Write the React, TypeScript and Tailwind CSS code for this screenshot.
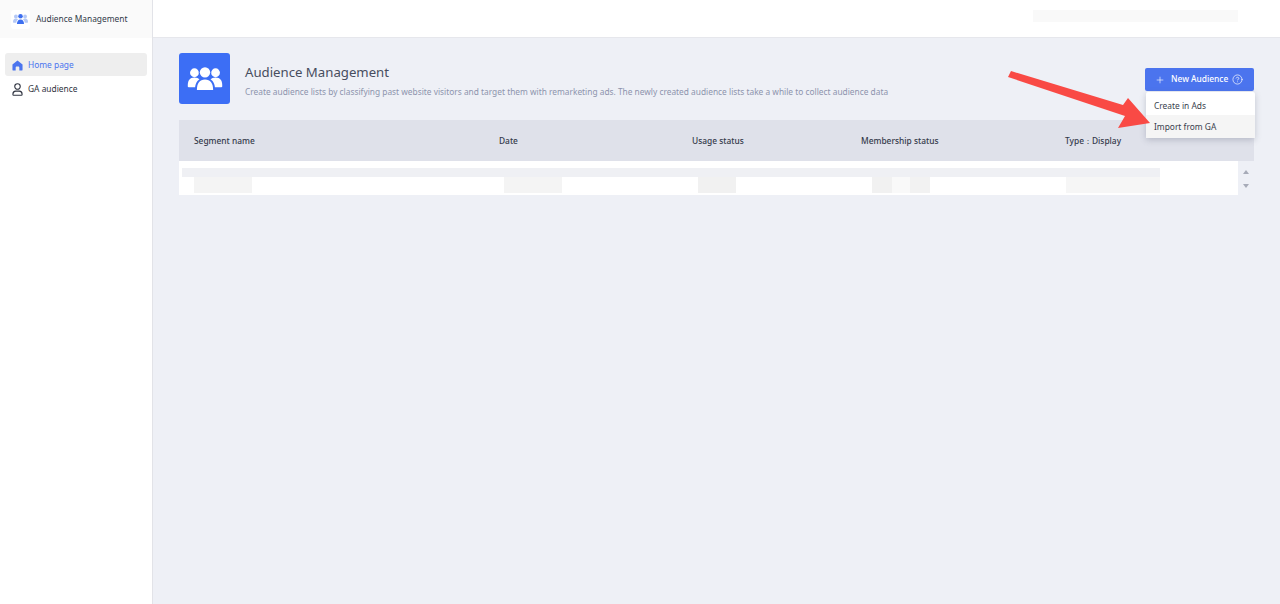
import { Plus, CircleHelp } from "lucide-react";

const font = { fontFamily: '"Noto Sans", sans-serif' };

function GroupIcon({ className, side, middle, gap }: { className: string; side: string; middle: string; gap: string }) {
  return (
    <svg viewBox="0 0 36 24" className={className}>
      <circle cx="7" cy="6" r="4.6" fill={side} />
      <circle cx="29" cy="6" r="4.6" fill={side} />
      <path d="M0 20c0-6 2-9 7-9s7 3 7 9v1H1.5C.6 21 0 20.6 0 20z" fill={side} />
      <path d="M36 20c0-6-2-9-7-9s-7 3-7 9v1h12.5c.9 0 1.5-.4 1.5-1z" fill={side} />
      <circle cx="18" cy="5.6" r="6.4" fill={gap} />
      <circle cx="18" cy="5.6" r="5.4" fill={middle} />
      <path d="M7.5 24c0-8 3.500-12.500 10.500-12.500S28.500 16 28.500 24z" fill={gap} />
      <path d="M9.500 24c0-7 3-11 8.500-11s8.500 4 8.500 11z" fill={middle} />
    </svg>
  );
}

function HomeSolid({ className }: { className: string }) {
  return (
    <svg viewBox="0 0 12 12" className={className}>
      <path d="M6 .5 11.500 5v5.500c0 .6-.4 1-1 1H8V8.200C8 7.500 7.500 7 6.800 7H5.200C4.500 7 4 7.500 4 8.200v3.300H1.500c-.6 0-1-.4-1-1V5z" fill="#4b74ee" />
    </svg>
  );
}

function UserOutline({ className }: { className: string }) {
  return (
    <svg viewBox="0 0 12 14" fill="none" stroke="#2f3340" strokeWidth="1.200" className={className}>
      <circle cx="6" cy="3.800" r="3" />
      <path d="M1 12.200c0-2.300 1.400-3.400 3-3.400h4c1.600 0 3 1.100 3 3.400v.300c0 .4-.3.700-.7.700H1.700c-.4 0-.7-.3-.7-.7z" />
    </svg>
  );
}

function Blurred({ className }: { className: string }) {
  return <div className={className} />;
}

export default function App() {
  return (
    <div style={font} className="relative flex h-[604px] w-[1280px] overflow-hidden bg-[#eef0f6]">
      {/* Sidebar */}
      <aside className="flex w-[153px] flex-none flex-col border-r border-[#e2e3e8] bg-white">
        <div className="flex h-[38px] items-center gap-[6px] bg-[#fafafa] pl-[11px]">
          <div className="flex h-[19px] w-[19px] items-center justify-center rounded-[3px] bg-white">
            <GroupIcon className="h-[10px] w-[15px]" side="#b4c8f6" middle="#3d6ff0" gap="#ffffff" />
          </div>
          <span className="text-[8.4px] text-[#333a4a]">Audience Management</span>
        </div>
        <nav className="mt-[15px] flex flex-col gap-[1px] px-[5px]">
          <div className="flex h-[23px] items-center gap-[5px] rounded-[3px] bg-[#eeeeee] pl-[7px] pt-[1px] text-[8.4px] text-[#4b74ee]">
            <HomeSolid className="h-[11px] w-[11px]" />
            Home page
          </div>
          <div className="flex h-[23px] items-center gap-[5px] pl-[7px] pt-[1px] text-[8.4px] text-[#2f3340]">
            <UserOutline className="h-[13px] w-[11px]" />
            GA audience
          </div>
        </nav>
      </aside>

      <div className="flex min-w-0 flex-1 flex-col">
        {/* Top bar */}
        <header className="flex h-[38px] flex-none justify-end border-b border-[#e6e7ec] bg-white pr-[42px] pt-[10px]">
          <Blurred className="h-[12px] w-[205px] bg-[#f9f9f9]" />
        </header>

        <main className="flex flex-col pl-[26px] pr-[26px] pt-[15px]">
          {/* Title row */}
          <div className="flex items-start">
            <div className="flex h-[51px] w-[51px] flex-none items-center justify-center rounded-[3px] bg-[#3c6ef5]">
              <GroupIcon className="h-[23px] w-[36px]" side="#ffffff" middle="#ffffff" gap="#3c6ef5" />
            </div>
            <div className="ml-[15px] flex-1 pt-[10px]">
              <h1 className="text-[13.200px] leading-[19px] font-normal text-[#474d5e]">Audience Management</h1>
              <p className="mt-[3px] text-[8.360px] leading-[14px] text-[#8d94ad]">
                Create audience lists by classifying past website visitors and target them with remarketing ads. The newly created audience lists take a while to collect audience data
              </p>
            </div>
            <div className="mt-[15px] flex h-[23px] w-[109px] flex-none items-center rounded-[2px] bg-[#4b74ee] pl-[10px] text-[8.400px] font-medium text-white">
              <Plus className="h-[10px] w-[10px]" strokeWidth={1.5} />
              <span className="ml-[6px]">New Audience</span>
              <CircleHelp className="ml-[4px] h-[11px] w-[11px]" strokeWidth={1.5} />
            </div>
          </div>

          {/* Table */}
          <div className="mt-[16px]">
            <div className="grid h-[41px] grid-cols-[305px_193px_169px_204px_1fr] items-center bg-[#dfe1ea] pt-[2px] text-[8.400px] font-medium text-[#343a4a]">
              <span className="pl-[15px]">Segment name</span>
              <span className="pl-[15px]">Date</span>
              <span className="pl-[15px]">Usage status</span>
              <span className="pl-[15px]">Membership status</span>
              <span className="pl-[15px]">Type：Display</span>
            </div>
            <div className="flex h-[34px]">
              <div className="w-[1059px] flex-none bg-white pl-[3px] pt-[7px]">
                <div className="h-[9px] w-[978px] bg-[#eff0f4]" />
                <div className="flex h-[16px] w-[978px]">
                  <div className="w-[12px]" />
                  <Blurred className="w-[58px] bg-[#f4f4f4]" />
                  <div className="w-[252px]" />
                  <Blurred className="w-[58px] bg-[#f4f4f4]" />
                  <div className="w-[136px]" />
                  <Blurred className="w-[38px] bg-[#f1f1f1]" />
                  <div className="w-[136px]" />
                  <Blurred className="w-[20px] bg-[#f1f1f1]" />
                  <div className="w-[18px] bg-[#f9f9f9]" />
                  <Blurred className="w-[20px] bg-[#f2f2f2]" />
                  <div className="w-[136px]" />
                  <Blurred className="w-[94px] bg-[#f6f6f6]" />
                </div>
              </div>
              <div className="flex w-[16px] flex-col items-center justify-center gap-[10px] pt-[1px]">
                <div className="h-0 w-0 border-x-[3.500px] border-b-[4px] border-x-transparent border-b-[#a7abb8]" />
                <div className="h-0 w-0 border-x-[3.500px] border-t-[4px] border-x-transparent border-t-[#a7abb8]" />
              </div>
            </div>
          </div>
        </main>
      </div>

      {/* Open dropdown */}
      <div className="absolute left-[1146px] top-[92px] w-[109px] rounded-[2px] bg-white text-[8.400px] text-[#3a3f4e] shadow-[0_2px_6px_rgba(90,95,120,0.3)]">
        <div className="flex h-[23px] items-center pl-[8px] pt-[6px]">Create in Ads</div>
        <div className="flex h-[23px] items-center bg-[#f5f5f5] pl-[8px] pt-[1px]">Import from GA</div>
      </div>

      {/* Annotation arrow */}
      <svg className="absolute left-0 top-0" width="1280" height="604" fill="none">
        <polygon points="1011,71 1123,105 1128,98 1150,123 1118,128 1125,116 1008,77" fill="#f94a45" />
      </svg>
    </div>
  );
}
